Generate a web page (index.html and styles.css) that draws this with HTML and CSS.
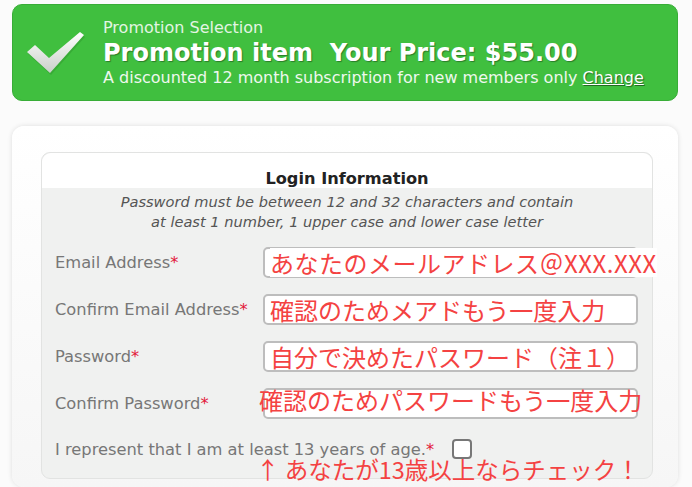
FILE: index.html
```html
<!DOCTYPE html>
<html lang="en">
<head>
  <meta charset="UTF-8">
  <meta name="viewport" content="width=device-width, initial-scale=1.0">
  <title>Promotion Selection</title>
  <link rel="stylesheet" href="styles.css">
</head>
<body>

  <div class="banner">
    <svg class="check" width="60" height="44" viewBox="0 0 60 44">
      <defs>
        <linearGradient id="checkFill" x1="0" y1="0" x2="0" y2="1">
          <stop offset="0" stop-color="#ffffff"/>
          <stop offset="1" stop-color="#c9cfc9"/>
        </linearGradient>
      </defs>
      <polygon points="1,21 9,14 23,27 54,1 58,4 24,42" fill="#2f9a2e" opacity="0.5" transform="translate(1,2)"/>
      <polygon points="1,21 9,14 23,27 54,1 58,4 24,42" fill="url(#checkFill)"/>
    </svg>
    <div class="promo">
      <div class="promo-label">Promotion Selection</div>
      <div class="promo-title">Promotion item&nbsp; Your Price: $55.00</div>
      <div class="promo-desc">A discounted 12 month subscription for new members only <a href="#">Change</a></div>
    </div>
  </div>

  <div class="panel">
    <div class="login-box">
      <h3>Login Information</h3>
      <div class="form-body">
        <p class="hint">Password must be between 12 and 32 characters and contain<br>at least 1 number, 1 upper case and lower case letter</p>

        <div class="row">
          <label>Email Address<span class="req">*</span></label>
          <div class="field">
            <input type="text" class="input-box">
            <span class="note note-wide">あなたのメールアドレス＠XXX.XXX</span>
          </div>
        </div>

        <div class="row">
          <label>Confirm Email Address<span class="req">*</span></label>
          <div class="field">
            <input type="text" class="input-box">
            <span class="note">確認のためメアドもう一度入力</span>
          </div>
        </div>

        <div class="row">
          <label>Password<span class="req">*</span></label>
          <div class="field">
            <input type="password" class="input-box">
            <span class="note">自分で決めたパスワード（注１）</span>
          </div>
        </div>

        <div class="row">
          <label>Confirm Password<span class="req">*</span></label>
          <div class="field">
            <input type="password" class="input-box">
            <span class="note note-left">確認のためパスワードもう一度入力</span>
          </div>
        </div>

        <div class="age-row">
          <label>I represent that I am at least 13 years of age.<span class="req">*</span></label>
          <input type="checkbox" class="age-box">
        </div>
        <p class="age-note">↑ あなたが13歳以上ならチェック！</p>
      </div>
    </div>
  </div>

</body>
</html>
```

FILE: styles.css
```css
body {
  font-family: "DejaVu Sans", Verdana, sans-serif;
  background-color: #fbfbfb;
  margin: 0;
  padding: 4px 14px 0 12px;
  height: 487px;
  box-sizing: border-box;
  overflow: hidden;
}
.banner {
  display: flex;
  align-items: flex-start;
  height: 97px;
  box-sizing: border-box;
  padding: 13px 0 0 13px;
  background-color: #40bf3f;
  border: 1px solid #38ad37;
  border-radius: 10px;
}
.check {
  margin-top: 13px;
  flex-shrink: 0;
}
.promo {
  margin-left: 17px;
  color: #ffffff;
}
.promo-label {
  font-size: 16px;
  line-height: 20px;
  color: #e3f5e3;
}
.promo-title {
  font-size: 24px;
  font-weight: bold;
  line-height: 30px;
  text-shadow: 1px 1px 1px rgba(0, 0, 0, 0.35);
}
.promo-desc {
  font-size: 16px;
  line-height: 20px;
  color: #eef8ee;
}
.promo-desc a {
  color: #ffffff;
  text-decoration: underline;
  text-shadow: 1px 1px 1px rgba(0, 0, 0, 0.45);
}
.panel {
  margin-top: 25px;
  height: 361px;
  box-sizing: border-box;
  padding: 26px 25px 0 29px;
  background: linear-gradient(#ffffff, #f6f6f6);
  border-radius: 12px;
  box-shadow: 0 0 5px rgba(0, 0, 0, 0.12);
}
.login-box {
  background-color: #f0f1f0;
  border: 1px solid #e2e3e2;
  border-radius: 9px;
  height: 325px;
}
.login-box h3 {
  margin: 0;
  padding: 16px 0 0;
  height: 19px;
  font-size: 16.2px;
  line-height: 19px;
  color: #222222;
  text-align: center;
  background-color: #ffffff;
  border-radius: 9px 9px 0 0;
}
.form-body {
  padding: 0 0 0 13px;
}
.hint {
  margin: 0 0 15px -13px;
  padding-top: 4px;
  font-size: 14.6px;
  line-height: 20px;
  font-style: italic;
  color: #555555;
  text-align: center;
}
.row {
  display: grid;
  grid-template-columns: 208px 375px;
  align-items: center;
  margin-bottom: 16px;
}
label {
  font-size: 16.3px;
  color: #777777;
}
.req {
  color: #e3193b;
}
.field {
  position: relative;
}
.input-box {
  display: block;
  width: 100%;
  height: 31px;
  box-sizing: border-box;
  margin: 0;
  border: 2px solid #bdbdbd;
  border-radius: 5px;
  background-color: #ffffff;
}
.note {
  position: absolute;
  left: 7px;
  top: 1px;
  font-family: "Noto Sans CJK JP", sans-serif;
  font-size: 24px;
  line-height: 29px;
  color: #f44242;
  white-space: nowrap;
}
.note-wide {
  letter-spacing: 0.5px;
  background-color: #ffffff;
}
.note-left {
  left: -4px;
  top: -3px;
}
.age-row {
  display: flex;
  align-items: center;
  height: 28px;
}
.age-box {
  appearance: none;
  width: 20px;
  height: 20px;
  margin: 0 0 0 18px;
  border: 2px solid #777777;
  border-radius: 4px;
  background-color: #ffffff;
}
.age-note {
  margin: -6px 0 0 201px;
  font-family: "Noto Sans CJK JP", sans-serif;
  font-size: 23.5px;
  line-height: 24px;
  color: #f44242;
  white-space: nowrap;
}
```
